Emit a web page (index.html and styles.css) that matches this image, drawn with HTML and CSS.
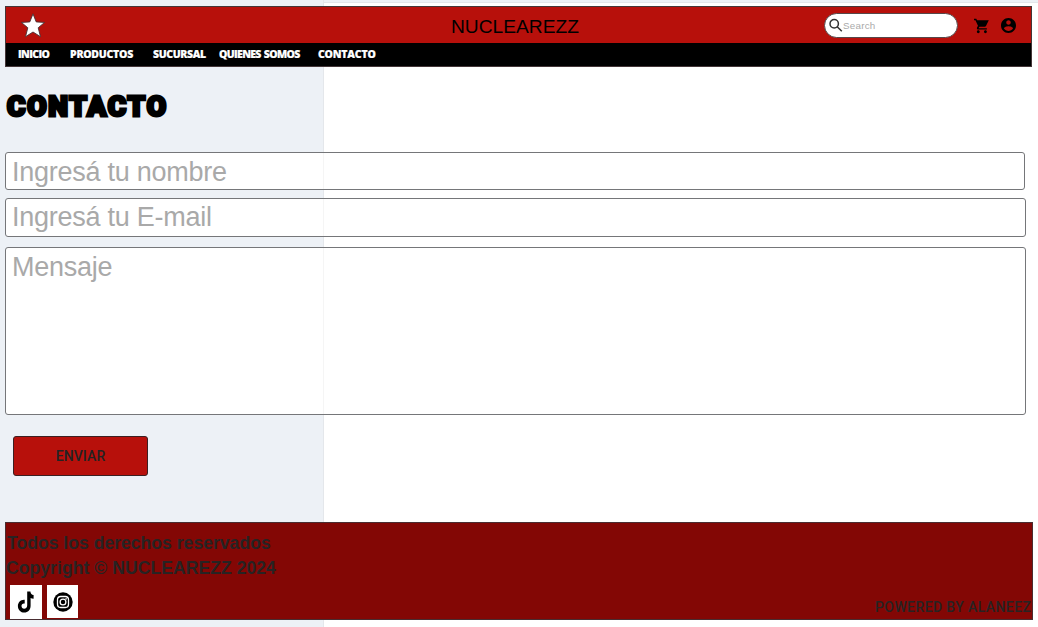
FILE: index.html
```
<!DOCTYPE html>
<html lang="es">
<head>
<meta charset="utf-8">
<title>NUCLEAREZZ - Contacto</title>
<link rel="stylesheet" href="styles.css">
</head>
<body>
<div class="page">
  <header class="header">
    <div class="topbar">
      <svg class="star" viewBox="0 0 24 25"><path d="M12 .8 15.2 8.900 23.600 9.400 17.200 14.800 19.500 23.700 12 19 4.500 23.700 6.800 14.800.4 9.400 8.800 8.900Z"/></svg>
      <span class="brand">NUCLEAREZZ</span>
      <label class="search">
        <svg class="lens" viewBox="0 0 14 14"><circle cx="5.2" cy="5.7" r="4.2"/><path d="m8.200 8.700 4.600 4.600"/></svg>
        <input class="search-input" type="text" placeholder="Search">
      </label>
      <svg class="cart" viewBox="1 2 21 20"><path d="M7 18c-1.1 0-1.99.9-1.99 2S5.9 22 7 22s2-.9 2-2-.9-2-2-2zM1 2v2h2l3.6 7.59-1.35 2.45C4.52 15.37 5.48 17 7 17h12v-2H7.42l1.13-2h7.45c.75 0 1.41-.41 1.75-1.03L21.7 4H5.21l-.94-2H1zm16 16c-1.1 0-1.99.9-1.99 2s.89 2 1.99 2 2-.9 2-2-.9-2-2-2z"/></svg>
      <svg class="user" viewBox="2 2 20 20"><path d="M12 2C6.48 2 2 6.48 2 12s4.48 10 10 10 10-4.48 10-10S17.52 2 12 2zm0 3c1.66 0 3 1.34 3 3s-1.34 3-3 3-3-1.34-3-3 1.34-3 3-3zm0 14.2c-2.5 0-4.71-1.28-6-3.22.03-1.99 4-3.08 6-3.08s5.97 1.09 6 3.08c-1.29 1.94-3.5 3.22-6 3.22z"/></svg>
    </div>
    <nav class="nav">
      <a class="link inicio">INICIO</a>
      <a class="link productos">PRODUCTOS</a>
      <a class="link sucursal">SUCURSAL</a>
      <a class="link quienes">QUIENES SOMOS</a>
      <a class="link contacto">CONTACTO</a>
    </nav>
  </header>
  <main class="main">
    <h1 class="title">CONTACTO</h1>
    <form class="form">
      <input class="field name" type="text" placeholder="Ingresá tu nombre">
      <input class="field email" type="text" placeholder="Ingresá tu E-mail">
      <textarea class="field message" placeholder="Mensaje"></textarea>
      <button class="send" type="button">ENVIAR</button>
    </form>
  </main>
  <footer class="footer">
    <div class="legal">
      <p class="line first">Todos los derechos reservados</p>
      <p class="line second">Copyright © NUCLEAREZZ 2024</p>
      <div class="social">
        <span class="tile tiktok"><svg viewBox="0 0 18 22" width="18" height="22"><path d="M10.2.5h3.2c.2 2.4 1.3 3.300 3.2 3.500v3.700c-1.200 0-2.200-.3-3-.8v7.900c0 4.100-2.700 6.800-6.300 6.800S.9 18.700.9 15.200c0-3.900 3-6.800 6.800-6.400v3.700c-2-.4-3.200.900-3.200 2.500 0 1.600 1.100 2.700 2.600 2.700 1.900 0 3.100-1.200 3.100-3.400Z"/></svg></span>
        <span class="tile insta"><svg viewBox="0 0 20 20" width="20" height="20"><circle cx="10" cy="10" r="9.700"/><g class="camera"><rect x="4.500" y="4.500" width="11" height="11" rx="3.200"/><circle cx="10" cy="10" r="2.900"/></g><circle class="dot" cx="13.100" cy="6.900" r=".8"/></svg></span>
      </div>
    </div>
    <span class="powered">POWERED BY ALANEEZ</span>
  </footer>
</div>
</body>
</html>
```
FILE: styles.css
```
* { box-sizing: border-box; }
body {
  margin: 0;
  font-family: "Liberation Sans", Arial, sans-serif;
  background: linear-gradient(90deg, #edf1f6 323px, #e4e7eb 323px, #e4e7eb 324px, transparent 324px),
    linear-gradient(#edf1f6 2px, #e3e6ea 2px, #e3e6ea 3px, #fff 3px);
}
.page { height: 627px; padding: 6px 5px 0; display: flex; flex-direction: column; overflow: hidden; }
.header { width: 1027px; height: 61px; border: 1px solid #443638; background: #000; }
.topbar { height: 36px; background: #b7100b; display: flex; align-items: center; }
.star { width: 24px; height: 25px; margin-left: 15px; fill: #fff; stroke: #463034; stroke-width: .9; }
.brand { width: 128px; margin-left: 406px; font-size: 19.2px; line-height: 24px; padding-top: 3px; white-space: nowrap; }
.search { width: 134px; height: 25px; margin-left: 245px; padding-left: 4px; border: 1px solid #55484a; border-radius: 13px; background: #fff; display: flex; align-items: center; }
.lens { width: 14px; height: 14px; fill: none; stroke: #333; stroke-width: 1.5; flex: none; }
.search-input { width: 100px; border: 0; padding: 0; font: 9.8px "Liberation Sans", Arial, sans-serif; letter-spacing: .25px; background: transparent; }
.search-input::placeholder { color: #aaa; opacity: 1; }
.cart { width: 15px; height: 16px; margin: 1px 0 0 16px; }
.user { width: 15px; height: 15px; margin-left: 12px; }
.nav { height: 22px; display: flex; align-items: center; padding-left: 12px; color: #fff; font: 800 10.5px/22px "Open Sans", sans-serif; }
.link { white-space: nowrap; letter-spacing: -.35px; -webkit-text-stroke: .2px #fff; }
.inicio { width: 52px; letter-spacing: -.6px; }
.productos { width: 83px; letter-spacing: -.25px; }
.sucursal { width: 66px; }
.quienes { width: 99px; letter-spacing: -.65px; word-spacing: 1px; }
.contacto { letter-spacing: -.2px; }
.title { margin: 22px 0 0 2px; height: 35px; font: 900 28px/36px Roboto, sans-serif; letter-spacing: 1.8px; color: #000; -webkit-text-stroke: 3px #000; stroke-linejoin: round; white-space: nowrap; }
.form { display: flex; flex-direction: column; align-items: flex-start; padding-top: 28px; }
.field { border: 1px solid #757679; border-radius: 3px; background: linear-gradient(90deg, #fff 317px, #f5f5f5 317px, #f5f5f5 318px, #fff 318px); padding: 0 6px; font: 27px "Liberation Sans", Arial, sans-serif; letter-spacing: -.25px; }
.field::placeholder { color: #a9a9a9; opacity: 1; }
.name { width: 1020px; height: 38px; padding-top: 2px; }
.email { width: 1021px; height: 39px; margin-top: 8px; }
.message { width: 1021px; height: 168px; margin-top: 10px; padding: 4px 6px; resize: none; }
.send { width: 135px; height: 40px; margin: 21px 0 0 8px; padding: 0 0 1px; border: 1px solid #3b2022; border-radius: 3px; background: #b7100b; color: #232323; font: 500 14px Roboto, sans-serif; letter-spacing: .1px; }
.footer { width: 1028px; height: 98px; margin-top: 46px; flex: none; border: 1px solid #492d31; background: #830705; color: #272323; display: flex; justify-content: space-between; align-items: flex-end; }
.legal { height: 96px; padding: 8px 0 0; }
.line { margin: 0; font-size: 17.6px; line-height: 25px; font-weight: 700; white-space: nowrap; }
.first { padding-left: 1px; }
.second { letter-spacing: .03px; }
.social { display: flex; gap: 5px; margin: 4px 0 0 4px; }
.tile { width: 31px; height: 33px; background: #fff; display: flex; align-items: center; justify-content: center; }
.tiktok { width: 32px; height: 34px; }
.camera { fill: none; stroke: #fff; stroke-width: 1.3; }
.dot { fill: #fff; }
.powered { width: 157px; font: 500 14px/16px Roboto, sans-serif; letter-spacing: .4px; margin-bottom: 4px; white-space: nowrap; }
```
